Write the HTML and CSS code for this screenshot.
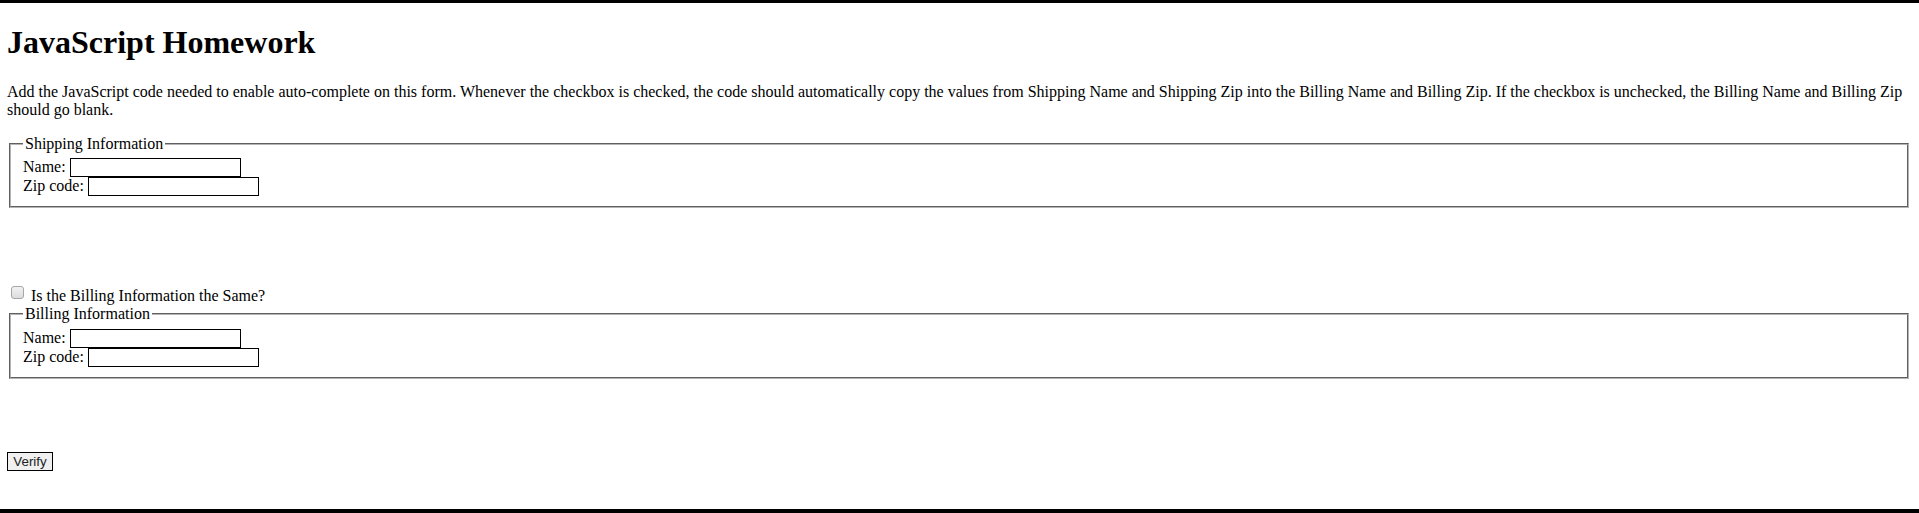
FILE: index.html
```html
<!DOCTYPE html>
<html lang="en">
<head>
<meta charset="utf-8">
<title>JavaScript Homework</title>
<link rel="stylesheet" href="styles.css">
</head>
<body>
<div class="page">
  <h1 class="title">JavaScript Homework</h1>
  <p class="intro">Add the JavaScript code needed to enable auto-complete on this form. Whenever the checkbox is checked, the code should automatically copy the values from Shipping Name and Shipping Zip into the Billing Name and Billing Zip. If the checkbox is unchecked, the Billing Name and Billing Zip should go blank.</p>
  <form class="form">
    <fieldset class="group group-shipping">
      <legend class="legend">Shipping Information</legend>
      <label class="row">Name: <input class="field" type="text" name="shippingName"></label>
      <label class="row">Zip code: <input class="field" type="text" name="shippingZip"></label>
    </fieldset>
    <div class="same"><input class="check" type="checkbox" id="same"> <label for="same">Is the Billing Information the Same?</label></div>
    <fieldset class="group group-billing">
      <legend class="legend">Billing Information</legend>
      <label class="row">Name: <input class="field" type="text" name="billingName"></label>
      <label class="row">Zip code: <input class="field" type="text" name="billingZip"></label>
    </fieldset>
    <div class="actions"><button class="verify" type="button">Verify</button></div>
  </form>
</div>
</body>
</html>
```
FILE: styles.css
```css
html, body {
  margin: 0;
  padding: 0;
  background: #fff;
}
body {
  font-family: "Liberation Serif", "Times New Roman", serif;
  font-size: 16px;
  color: #000;
}
.page {
  min-height: 100vh;
  box-sizing: border-box;
  border-top: 3px solid #000;
  border-bottom: 4px solid #000;
  padding: 0 8px 0 7px;
  display: flow-root;
}
.title {
  font-size: 32px;
  font-weight: bold;
  margin: 21.44px 0;
}
.intro {
  margin: 16px 0;
}
.form {
  margin: 0;
}
.group {
  margin: 0 2px;
  padding: 5.6px 12px 10px;
  border: 2px groove #b4b4b4;
}
.legend {
  padding: 0 2px;
}
.row {
  display: block;
}
.field {
  box-sizing: border-box;
  width: 171px;
  height: 19px;
  margin: 0;
  padding: 1px 2px;
  border: 1px solid #000;
  font-family: "Liberation Sans", Arial, sans-serif;
  font-size: 13.33px;
  vertical-align: baseline;
  background: #fff;
}
.same {
  margin-top: 75px;
}
.check {
  appearance: none;
  -webkit-appearance: none;
  box-sizing: border-box;
  width: 13px;
  height: 13px;
  margin: 3px 3px 3px 4px;
  border: 1px solid #a6a6a6;
  border-radius: 3px;
  background: linear-gradient(#f2f2f2, #dcdcdc);
  vertical-align: -1px;
}
.actions {
  margin-top: 73px;
}
.verify {
  box-sizing: border-box;
  width: 46px;
  height: 19px;
  margin: 0;
  padding: 0 4px;
  border: 1px solid #000;
  border-radius: 0;
  background: #f0f0f0;
  color: #222;
  font-family: "Liberation Sans", Arial, sans-serif;
  font-size: 13.33px;
  line-height: 15px;
}
```
